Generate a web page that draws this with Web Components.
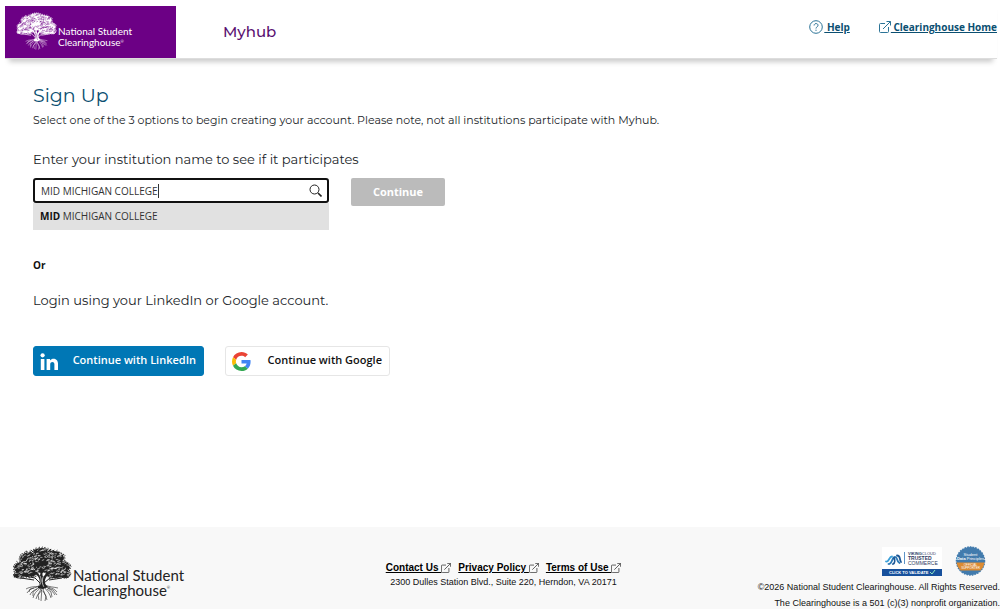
<!DOCTYPE html>
<html lang="en">
<head>
<meta charset="utf-8">
<meta name="viewport" content="width=device-width, initial-scale=1">
<title>Myhub - Sign Up</title>
<style>
  html { --display: Montserrat, Inter, sans-serif; --ui: "Segoe UI", "Open Sans", "Noto Sans", sans-serif; --plain: Arial, "Liberation Sans", sans-serif; }
  body { margin: 0; background: #fff; color: #212529; font-family: var(--ui); }
</style>
</head>
<body>
<myhub-page></myhub-page>
<script>
function define(name, html, setup) {
  const template = document.createElement('template');
  template.innerHTML = html;
  customElements.define(name, class extends HTMLElement {
    constructor() {
      super();
      this.attachShadow({ mode: 'open' }).append(template.content.cloneNode(true));
    }
    connectedCallback() { if (setup) setup(this.shadowRoot, this); }
  });
}

/* Engraved oak: lobed crown, scattered leaves, trunk and roots */
define('oak-tree', `
<style>
  :host { display: block; width: var(--tree-width, 60px); flex: none; }
  svg { display: block; width: 100%; height: auto; }
</style>
<svg viewBox="0 0 60 56" aria-hidden="true">
  <g class="crown" fill="currentColor">
    <ellipse cx="30" cy="8" rx="11" ry="6"/><ellipse cx="18" cy="13" rx="10" ry="7"/>
    <ellipse cx="42" cy="12" rx="10" ry="7"/><ellipse cx="10" cy="22" rx="8" ry="6"/>
    <ellipse cx="50" cy="21" rx="8" ry="6"/><ellipse cx="30" cy="18" rx="18" ry="9"/>
    <ellipse cx="7" cy="29" rx="5" ry="3"/><ellipse cx="53" cy="28" rx="5" ry="4"/>
    <ellipse cx="17" cy="27" rx="9" ry="4"/><ellipse cx="43" cy="27" rx="9" ry="5"/>
  </g>
  <g class="leaves" stroke-linecap="round"></g>
  <path fill="currentColor" d="M26 41c3-5 2-9-2-13l-7-4 8 2 3 4 1-7 2 8 4-4 6-2-6 5c-3 4-3 8 1 11l-5 2-5-1z"/>
  <path fill="none" stroke="currentColor" stroke-width="1" d="M13 30l10 2 5 5M47 31l-9 1-6 5M9 32l13 2M50 32l-13 2"/>
  <path fill="none" stroke="var(--tree-ground)" stroke-width=".7" d="M28 30c2 4 1 7-1 10M31 31c-1 4-1 7 1 10"/>
  <path fill="none" stroke="currentColor" stroke-width=".6" d="M28 40c-3 1-9 0-14 3M28 40c-5 2-10 2-13 7M28 41c-4 3-8 3-10 8M29 41c-3 4-6 4-8 11M29 41c0 5-4 7-5 12M30 41c0 5-1 9-1 14M31 41c0 5 3 8 4 13M32 40c2 5 5 5 7 12M33 40c4 3 7 4 10 9M33 40c5 2 9 2 12 6M33 39c4 2 9 2 13 3M22 42l-4 1-1 3M25 43l-4 3v4M36 42l5 2 4 5M35 43l4 3 1 5M30 44l-4 5 1 5M31 45l3 5-1 5"/>
</svg>`, root => {
  const group = root.querySelector('.leaves');
  if (group.childElementCount) return;
  const lobes = [...root.querySelectorAll('ellipse')].map(e => ['cx', 'cy', 'rx', 'ry'].map(k => +e.getAttribute(k)));
  let seed = 11;
  const rand = () => (seed = (seed * 16807) % 2147483647) / 2147483647;
  let dark = '', light = '';
  for (const [cx, cy, rx, ry] of lobes) {
    for (let i = 0; i < 24; i++) {
      const a = i / 24 * Math.PI * 2;
      const r = 1 + rand() * .12;
      dark += `M${(cx + Math.cos(a) * rx * r).toFixed(1)} ${(cy + Math.sin(a) * ry * r).toFixed(1)}l${(rand() * 1.6 - .8).toFixed(1)} ${(rand() * 1.6 - .8).toFixed(1)}`;
    }
    for (let i = 0; i < rx * ry / 2.2; i++) {
      const a = rand() * Math.PI * 2, r = Math.sqrt(rand());
      light += `M${(cx + Math.cos(a) * rx * r).toFixed(1)} ${(cy + Math.sin(a) * ry * r).toFixed(1)}l${(rand() * 2).toFixed(1)} ${(rand() * 1.2 - .9).toFixed(1)}`;
    }
  }
  group.innerHTML = `<path fill="none" stroke="currentColor" stroke-width="1" d="${dark}"/><path fill="none" stroke="var(--tree-ground)" stroke-width=".6" d="${light}"/>`;
});

define('brand-logo', `
<style>
  :host { display: flex; align-items: flex-end; }
  .name { font-family: Lato, var(--ui); font-size: var(--name-size); line-height: var(--name-line); margin-left: 1px; padding-bottom: var(--name-lift); white-space: nowrap; }
  .second { display: flex; }
  sup { font-size: 4px; line-height: 10px; vertical-align: top; }
</style>
<oak-tree></oak-tree>
<div class="name"><div>National Student</div><div class="second">Clearinghouse<sup>®</sup></div></div>`);

define('external-icon', `
<style>:host { display: inline-block; width: var(--icon-size, 10px); height: var(--icon-size, 10px); } svg { display: block; width: 100%; height: 100%; }</style>
<svg viewBox="0 0 12 12" fill="none" stroke="currentColor" stroke-width="1" aria-hidden="true">
  <path d="M6 2.500H1.500a1 1 0 0 0-1 1v7a1 1 0 0 0 1 1h7a1 1 0 0 0 1-1V6M4 8l7.500-7.500M7.500.5h4v4"/>
</svg>`);

define('site-header', `
<style>
  :host { display: flex; align-items: flex-end; margin: 0 3px 0 5px; padding-top: 6px; box-shadow: 0 7px 5px -4px #ccc; border-bottom: 1px solid #ddd; }
  brand-logo { box-sizing: border-box; width: 171px; height: 52px; padding: 0 0 8px 11px; background: #6c0085; color: #fff; --tree-ground: #6c0085; --tree-width: 41px; --name-size: 10px; --name-line: 11px; --name-lift: 2px; }
  .product { flex: 1; margin-left: 47px; align-self: center; font: 500 15px/20px var(--display); color: #5a1070; }
  nav { display: flex; gap: 29px; align-self: flex-start; padding-top: 13px; }
  a { display: flex; align-items: center; color: #0b4f71; font: 700 10px/16px var(--ui); text-decoration: underline; white-space: nowrap; }
  a svg { width: 14px; height: 14px; margin-right: 1px; }
  external-icon { --icon-size: 12px; color: #2c7497; }
</style>
<brand-logo></brand-logo>
<div class="product">Myhub</div>
<nav>
  <a href="#help"><svg viewBox="0 0 14 14" fill="none" stroke="#2c7497" aria-hidden="true"><circle cx="7" cy="7" r="6.300"/><path d="M5.100 5.500c0-2.600 3.900-2.500 3.900-.2C9 7 7 6.800 7 8.500M7 9.700v1.200"/></svg><span>&nbsp;Help</span></a>
  <a href="#home"><external-icon></external-icon><span>&nbsp;Clearinghouse Home</span></a>
</nav>`);

define('institution-search', `
<style>
  :host { display: block; }
  label { display: block; font: 400 13px/18px var(--display); }
  .row { display: flex; align-items: flex-start; gap: 22px; margin-top: 10px; }
  .combo { width: 296px; }
  .field { position: relative; display: flex; align-items: center; box-sizing: border-box; height: 25px; border: 2px solid #111; border-radius: 3px; padding-right: 5px; }
  input { flex: 1; min-width: 0; border: 0; outline: 0; padding: 0 0 0 6px; background: none; font: 10px/16px var(--ui); color: #333; }
  .caret { position: absolute; left: 123px; top: 4px; width: 1px; height: 14px; background: #333; }
  .field svg { width: 13px; height: 13px; }
  ul { list-style: none; margin: 0; padding: 0; background: #e1e1e1; }
  li { padding: 5px 7px 6px; font-size: 10px; line-height: 16px; color: #333; }
  b { color: #111; }
  button { width: 94px; height: 28px; padding: 0; border: 0; border-radius: 2px; background: #bbb; color: #fff; font: 700 11px/16px var(--ui); }
</style>
<label for="institution">Enter your institution name to see if it participates</label>
<div class="row">
  <div class="combo">
    <div class="field">
      <input id="institution" type="text" value="MID MICHIGAN COLLEGE" autocomplete="off">
      <span class="caret"></span>
      <svg viewBox="0 0 13 13" fill="none" stroke="#222" aria-hidden="true"><circle cx="5.500" cy="5.500" r="4.500"/><path d="M9 9l3.500 3.500" stroke-width="1.600"/></svg>
    </div>
    <ul role="listbox" aria-label="Institutions"><li role="option"><b>MID</b> MICHIGAN COLLEGE</li></ul>
  </div>
  <button type="button" disabled>Continue</button>
</div>`);

define('social-button', `
<style>
  :host { display: block; }
  button { display: flex; align-items: center; justify-content: space-between; box-sizing: border-box; width: var(--w); height: 30px; padding: 0 7px 0 6px; border: 1px solid var(--edge); border-radius: 3px; background: var(--fill); color: var(--ink); font: 600 11px/16px var(--ui); white-space: nowrap; }
  span { padding-bottom: 2px; }
</style>
<button type="button"><slot name="icon"></slot><span><slot></slot></span></button>`);

define('sign-up', `
<style>
  :host { display: block; padding: 25px 33px; }
  h1 { margin: 0; font: 400 19px/24px var(--display); color: #0b4f71; }
  p { margin: 0; }
  .intro { margin-top: 4px; font: 400 11px/16px var(--display); }
  institution-search { margin-top: 22px; }
  .or { margin-top: 27px; font: 700 10px/16px var(--ui); color: #111; }
  .alt { margin-top: 18px; font: 400 13px/18px var(--display); }
  .social { display: flex; gap: 21px; margin-top: 37px; }
  .linkedin { --w: 171px; --fill: #0077b5; --edge: #0077b5; --ink: #fff; }
  .google { --w: 165px; --fill: #fff; --edge: #e6e6e6; --ink: #111; }
  svg { width: 19px; height: 19px; }
</style>
<h1>Sign Up</h1>
<p class="intro">Select one of the 3 options to begin creating your account. Please note, not all institutions participate with Myhub.</p>
<institution-search></institution-search>
<p class="or">Or</p>
<p class="alt">Login using your LinkedIn or Google account.</p>
<div class="social">
  <social-button class="linkedin"><svg slot="icon" viewBox="0 0 19 19" fill="#fff" aria-hidden="true"><circle cx="2.600" cy="3.300" r="2.100"/><path d="M.8 7h3.600v11H.8zM6.600 7H10v1.500c2.100-3 8-2.300 8 3V18h-3.600v-5.800c0-3.200-4.200-2.800-4.200 0V18H6.600z"/></svg>Continue with LinkedIn</social-button>
  <social-button class="google"><svg slot="icon" viewBox="0 0 48 48" aria-hidden="true"><path fill="#ea4335" d="M24 9.500c3.540 0 6.710 1.220 9.210 3.600l6.850-6.850C35.900 2.380 30.470 0 24 0 14.620 0 6.510 5.380 2.560 13.220l7.980 6.190C12.430 13.720 17.740 9.500 24 9.500z"/><path fill="#4285f4" d="M46.980 24.550c0-1.570-.15-3.090-.38-4.550H24v9.020h12.940c-.58 2.960-2.260 5.480-4.780 7.180l7.730 6c4.510-4.180 7.090-10.360 7.090-17.650z"/><path fill="#fbbc05" d="M10.530 28.590A14.500 14.500 0 0 1 9.770 24c0-1.600.28-3.140.76-4.590l-7.980-6.190A24 24 0 0 0 0 24c0 3.880.92 7.540 2.560 10.780z"/><path fill="#34a853" d="M24 48c6.480 0 11.930-2.130 15.890-5.810l-7.730-6c-2.150 1.450-4.920 2.300-8.160 2.300-6.260 0-11.570-4.220-13.470-9.910l-7.980 6.190C6.510 42.620 14.620 48 24 48z"/></svg>Continue with Google</social-button>
</div>`);

define('trust-badges', `
<style>:host { display: flex; gap: 13px; align-items: center; } svg { display: block; }</style>
<svg width="60" height="29" viewBox="0 0 60 29" role="img" aria-label="VikingCloud Trusted Commerce">
  <rect width="60" height="29" fill="#fff"/>
  <g fill="none" stroke-width="1.800" stroke-linecap="round"><path stroke="#3da0d8" d="M4 14.500c3 1 3-5 6-5"/><path stroke="#2b78b5" d="M6.500 17c4 1 3-7 6.500-7 3 0 1 4 4.500 6"/><path stroke="#1c5796" d="M11 17c2-1 2-4 1-6M15 8.500c4 0 2 4 4 6.500"/></g>
  <path d="M22.500 5v12" stroke="#5d93c7"/>
  <g fill="#303b61" font-family="Liberation Sans, sans-serif" font-size="5"><text x="26" y="8" font-size="4"><tspan font-weight="700">VIKING</tspan>CLOUD</text><text x="26" y="13" font-weight="700">TRUSTED</text><text x="26" y="18">COMMERCE</text></g>
  <rect y="22" width="60" height="7" fill="#17509c"/>
  <text x="7" y="27" fill="#fff" font-family="Liberation Sans, sans-serif" font-size="4" font-weight="700">CLICK TO VALIDATE</text>
  <path d="M48 25l2 2 3-4" fill="none" stroke="#8ee5c0"/>
</svg>
<svg width="31" height="30" viewBox="0 0 31 30" role="img" aria-label="Student Data Principles">
  <circle cx="15.500" cy="15" r="14" fill="#427bad" stroke="#427bad" stroke-width="1.500" stroke-dasharray="1.700 1"/>
  <path d="M1.500 16.500h28a14 14 0 0 1-4 8h-20a14 14 0 0 1-4-8z" fill="#dc8b32"/>
  <g fill="#fff" text-anchor="middle" font-family="Liberation Sans, sans-serif" font-size="4"><text x="15.500" y="10">Student</text><text x="15.500" y="14"><tspan font-weight="700">Data</tspan> Principles</text><text x="15.500" y="20" font-size="3">OFFICIAL</text><text x="15.500" y="23" font-size="3">SUPPORTER</text></g>
</svg>`);

define('site-footer', `
<style>
  :host { display: grid; grid-template-columns: 1fr auto 1fr; box-sizing: border-box; min-height: 82px; padding-left: 7px; background: #f8f8f8; color: #111; font-family: var(--plain); }
  brand-logo { align-self: start; margin: 19px 0 0 5px; color: #222; --tree-ground: #f8f8f8; --tree-width: 60px; --name-size: 15px; --name-line: 15px; --name-lift: 4px; }
  .middle { padding-top: 33px; text-align: center; }
  nav { display: flex; gap: 7px; justify-content: center; }
  a { display: flex; align-items: center; color: #000; font-size: 10px; line-height: 15px; font-weight: 700; white-space: nowrap; }
  external-icon { color: #444; }
  address, p { margin: 0; font-style: normal; font-size: 9px; line-height: 14px; white-space: nowrap; }
  p { line-height: 10px; }
  .right { padding-top: 19px; display: flex; flex-direction: column; align-items: flex-end; gap: 6px; }
  trust-badges { margin-right: 14px; }
</style>
<brand-logo></brand-logo>
<div class="middle">
  <nav>
    <a href="#contact"><span>Contact Us&nbsp;</span><external-icon></external-icon></a>
    <a href="#privacy"><span>Privacy Policy&nbsp;</span><external-icon></external-icon></a>
    <a href="#terms"><span>Terms of Use&nbsp;</span><external-icon></external-icon></a>
  </nav>
  <address>2300 Dulles Station Blvd., Suite 220, Herndon, VA 20171</address>
</div>
<div class="right">
  <trust-badges></trust-badges>
  <p>©2026 National Student Clearinghouse. All Rights Reserved.</p>
  <p>The Clearinghouse is a 501 (c)(3) nonprofit organization.</p>
</div>`);

define('myhub-page', `
<style>
  :host { display: flex; flex-direction: column; min-height: 100vh; }
  main { flex: 1; }
</style>
<site-header></site-header>
<main><sign-up></sign-up></main>
<site-footer></site-footer>`);
</script>
</body>
</html>
